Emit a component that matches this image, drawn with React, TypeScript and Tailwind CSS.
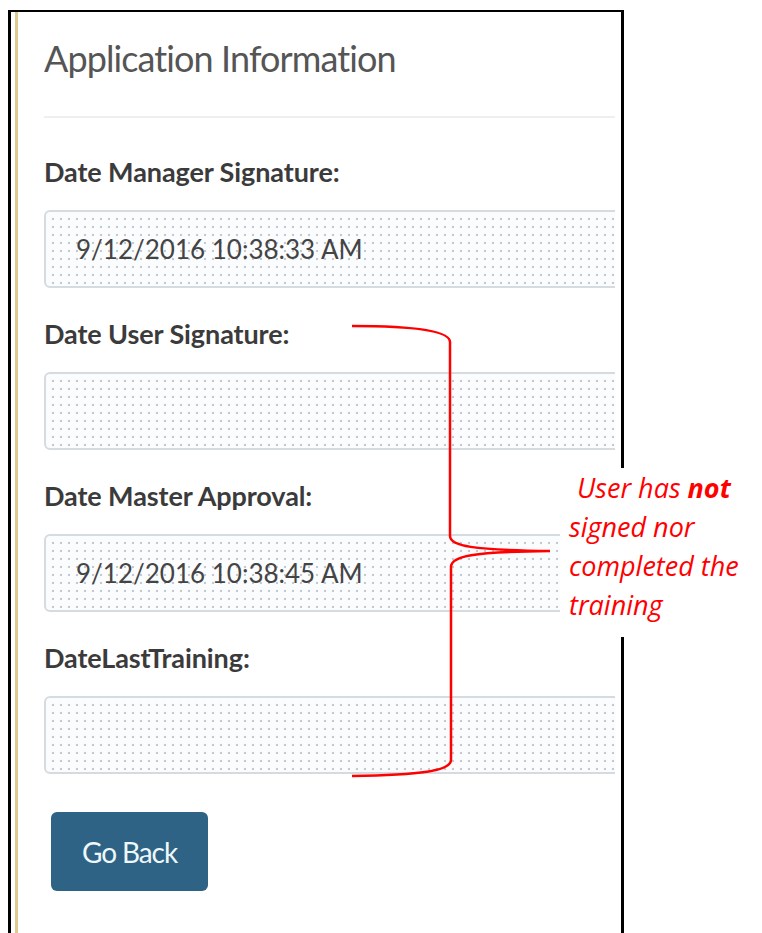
const fields = [
  { label: 'Date Manager Signature:', value: '9/12/2016 10:38:33 AM' },
  { label: 'Date User Signature:', value: '' },
  { label: 'Date Master Approval:', value: '9/12/2016 10:38:45 AM' },
  { label: 'DateLastTraining:', value: '' },
]

/**
 * Read-only date field with the dotted "disabled" look.
 */
function DateField({ label, value }: { label: string; value: string }) {
  return (
    <div className="mb-[30px]">
      <div className="h-8 leading-8 text-[27px] font-bold tracking-[-0.1px] text-[#3b3b3b]">{label}</div>
      <div className="mt-[22px] -mr-4 h-[78px] flex items-center pl-[30px] rounded-md border-2 border-[#d6dbe0] bg-[#fbfcfd] bg-[radial-gradient(#c4c9d0_1.1px,transparent_1.6px)] bg-[length:8px_8px] bg-[position:3px_3px]">
        <span className="text-[26px] tracking-[0px] text-[#444]">{value}</span>
      </div>
    </div>
  )
}

export default function App() {
  return (
    <div className="relative w-[762px] h-[933px] overflow-hidden bg-white font-['Lato','Noto_Sans',sans-serif]">
      {/* Panel frame */}
      <div className="ml-2 mt-[10px] w-[616px] h-[923px] border-l-[3px] border-t-2 border-r-[3px] border-black bg-white">
        <div className="ml-1 h-full border-l-[3px] border-[#dccb8c] pl-[26px] pr-[6px]">
          <div className="h-full overflow-hidden">
            {/* Header */}
            <h1 className="pt-[24px] h-[70px] leading-[44px] text-[36px] tracking-[-0.9px] text-[#555]">
              Application Information
            </h1>
            <hr className="mt-[34px] mb-[38px] -ml-[3px] border-t-2 border-[#efefef]" />

            {/* Fields */}
            {fields.map((f) => (
              <DateField key={f.label} label={f.label} value={f.value} />
            ))}

            <button className="mt-[8px] ml-[7px] w-[157px] h-[79px] rounded-md bg-[#2e6385] text-[28px] tracking-[-1.1px] text-[#eef8fb]">
              Go Back
            </button>
          </div>
        </div>
      </div>

      {/* Bracket annotation */}
      <svg className="absolute left-0 top-0 pointer-events-none" width="762" height="933" viewBox="0 0 762 933">
        <path
          d="M352 326 C410 326 450 330 450 342 L450 536 C450 546 472 550 550 551 M550 551 C472 552 451 556 451 567 L451 760 C451 771 420 775 352 776"
          fill="none"
          stroke="#ff0000"
          strokeWidth="2.5"
        />
      </svg>
      <div className="absolute left-[560px] top-[468px] w-[196px] h-[169px] bg-white pl-[9px] text-[27px] leading-[39px] italic text-[#ff0000] font-['Open_Sans','Lato',sans-serif]">
        <div className="pl-[8px]">
          User has <b>not</b>
        </div>
        <div>signed nor</div>
        <div>completed the</div>
        <div>training</div>
      </div>
    </div>
  )
}
